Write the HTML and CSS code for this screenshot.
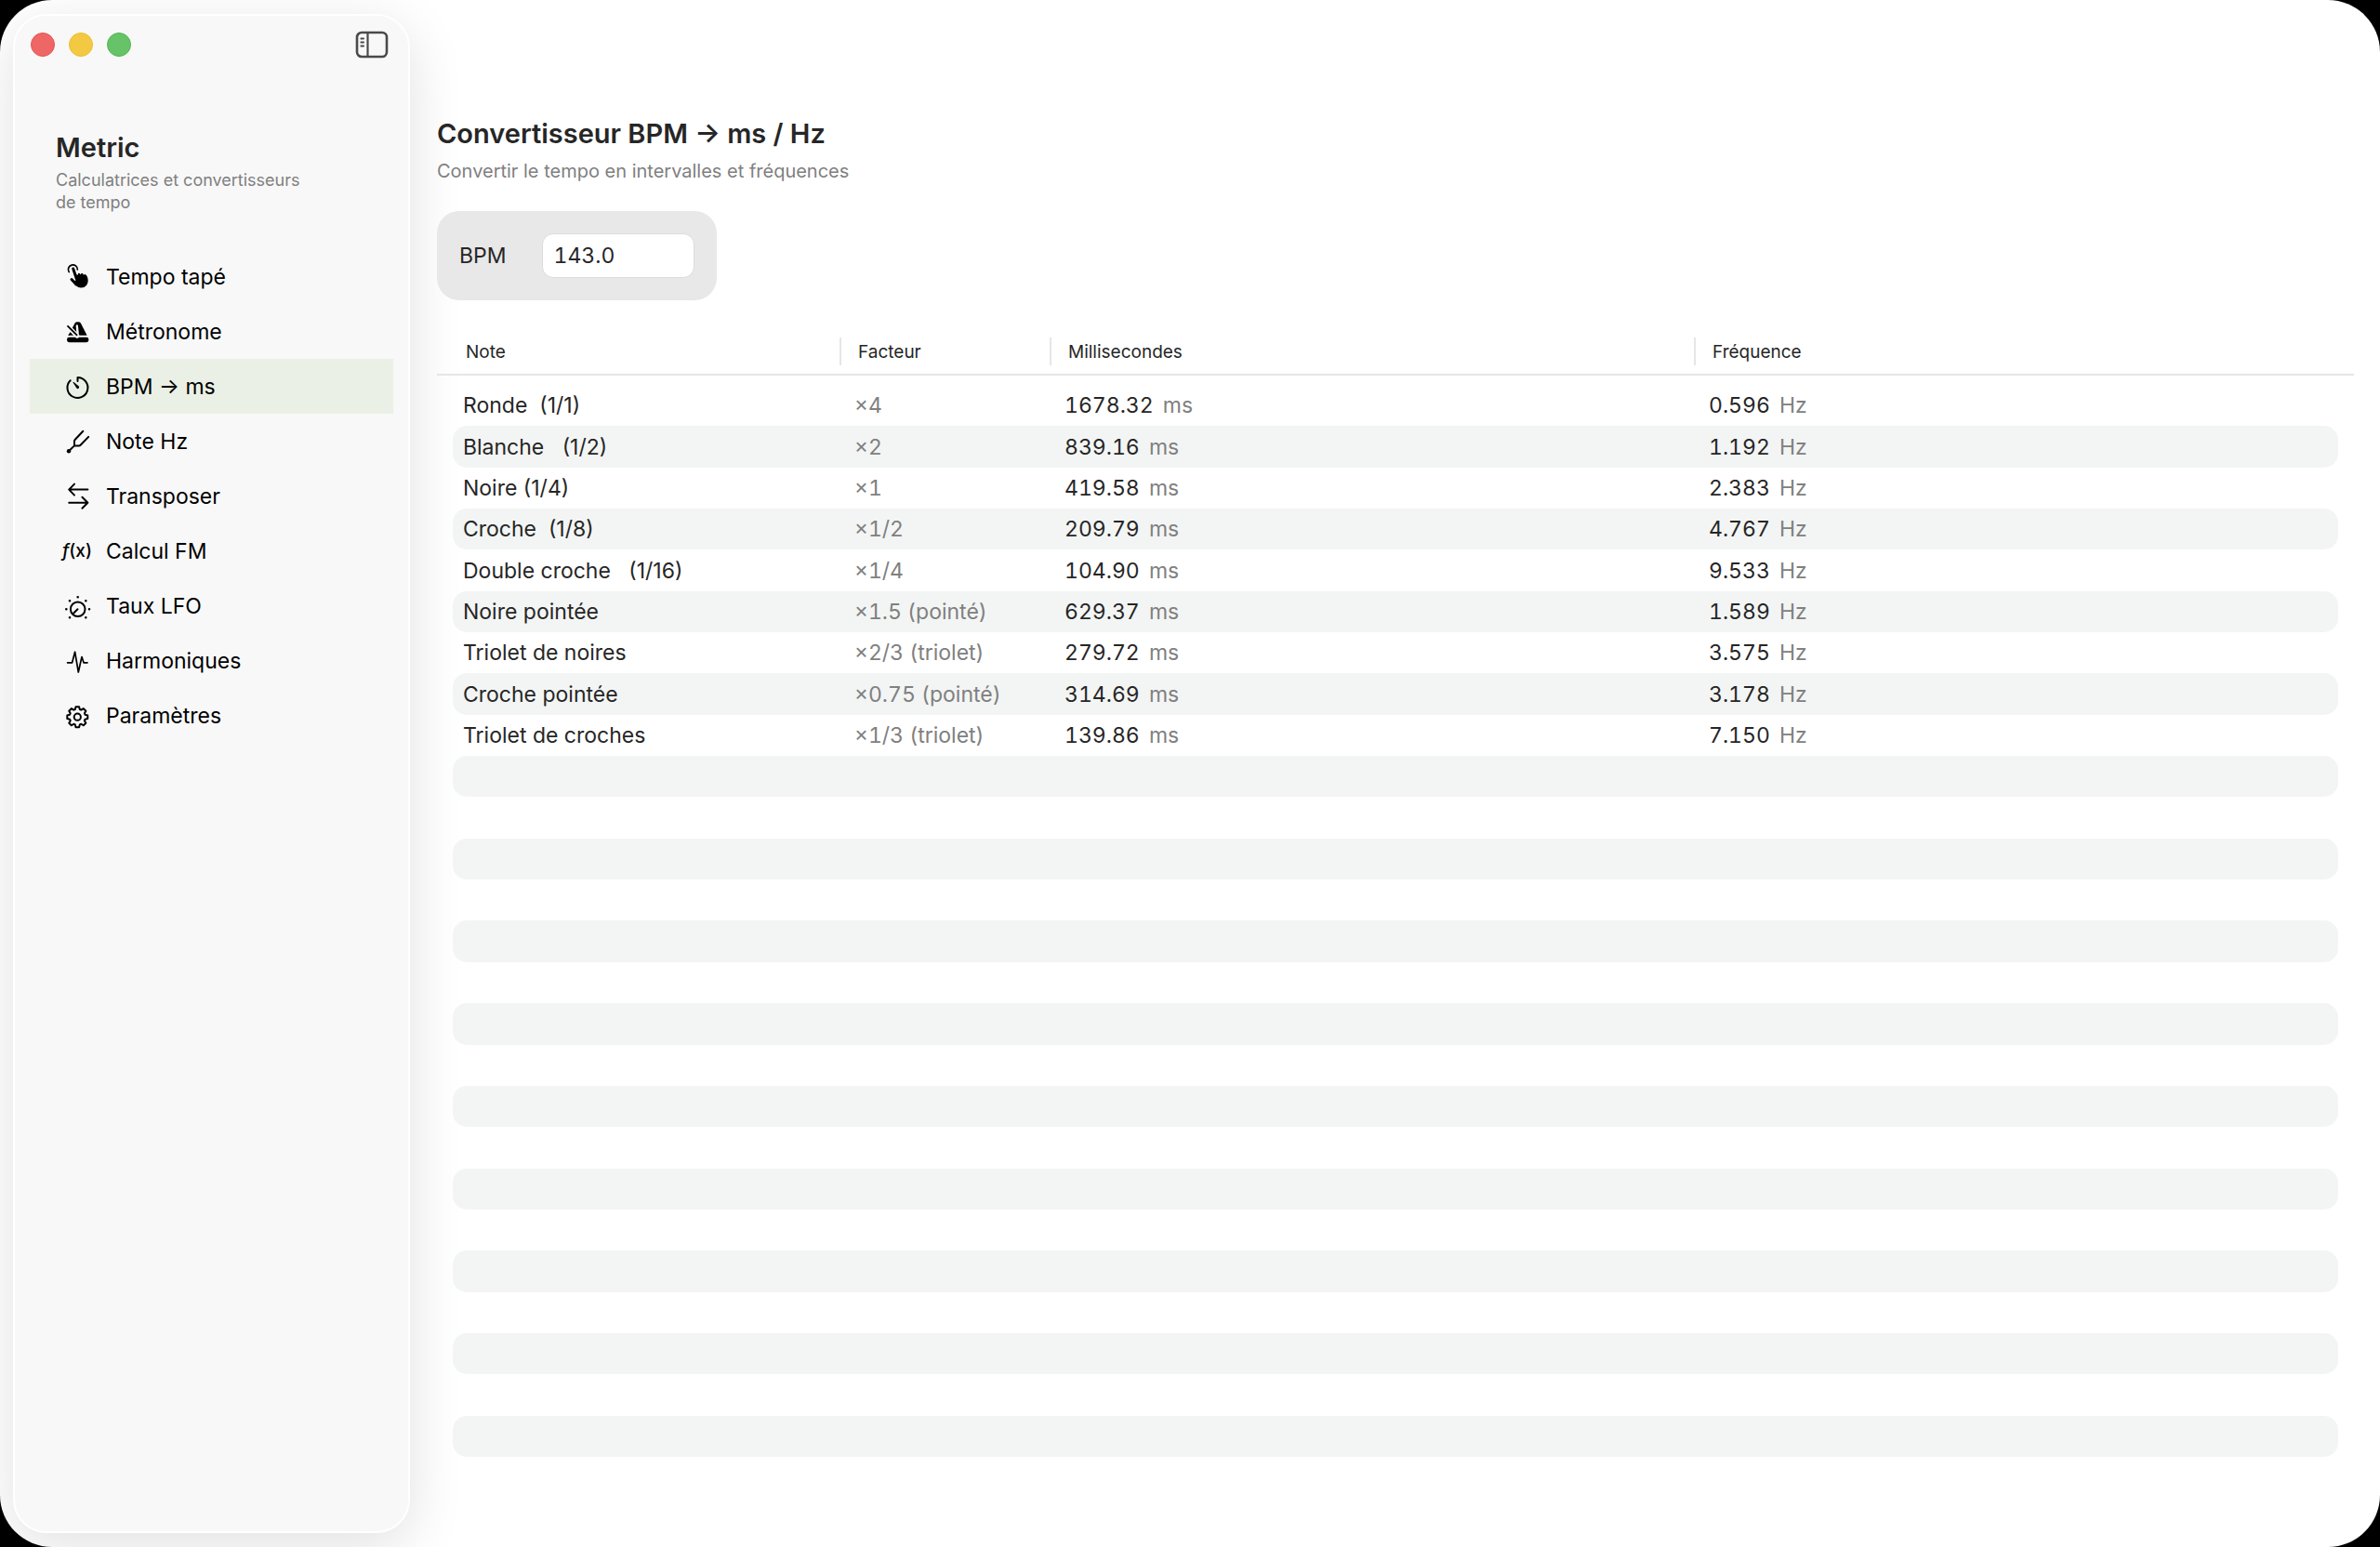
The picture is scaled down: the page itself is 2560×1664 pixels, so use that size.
FILE: index.html
```
<!DOCTYPE html>
<html lang="fr">
<head>
  <meta charset="utf-8">
  <title>Metric</title>
  <link rel="stylesheet" href="styles.css">
</head>
<body>
  <div class="window">
    <aside class="sidebar">
      <div class="titlebar">
        <button type="button" class="light light-close" aria-label="Fermer"></button>
        <button type="button" class="light light-minimize" aria-label="Réduire"></button>
        <button type="button" class="light light-zoom" aria-label="Agrandir"></button>
        <button type="button" class="toggle" aria-label="Barre latérale">
          <svg width="36" height="30" viewBox="0 0 36 30" fill="none" stroke="#4a4a4a" stroke-width="2.6" stroke-linecap="round">
            <rect x="2" y="2" width="32" height="26" rx="5"/>
            <path d="M13.5 2v26" stroke-width="2.2"/>
            <path d="M6.3 8.5h2.8M6.3 12.5h2.8M6.3 16.5h2.8" stroke-width="1.8"/>
          </svg>
        </button>
      </div>

      <div class="brand">
        <h2>Metric</h2>
        <p>Calculatrices et convertisseurs<br>de tempo</p>
      </div>

      <nav class="menu">
        <a href="#tempo" class="menu-item">
          <svg class="icon" viewBox="0 0 32 32">
            <path d="M7.2 10.6A5 5 0 1 1 16.4 8" stroke-width="1.7"/>
            <path d="M11.7 7L15.4 18" stroke-width="3"/>
            <path d="M10 18.5L15 24" stroke-width="3"/>
            <path class="solid" d="M13.6 12.5L16.6 14Q16.8 11.6 18 11.8Q19 11.8 19.6 13.4Q20.2 11.8 21.4 12Q22.6 12.2 23 14Q23.8 12.6 25 13.2Q26.4 13.8 27.2 16.6Q28.6 21.5 26 25Q23.5 27.7 20 27.5Q16.5 27.3 14 24.5L12.5 20.5L15 19z"/>
          </svg>
          Tempo tapé
        </a>
        <a href="#metronome" class="menu-item">
          <svg class="icon" viewBox="0 0 32 32">
            <rect class="solid" x="5" y="21.8" width="23.4" height="5.4" rx="2.4"/>
            <path class="solid" d="M13.6 6.6Q14.2 5.2 16.6 5.2Q19.2 5.2 19.8 6.6L26.6 19.8H6.6z"/>
            <path class="cut" d="M15.8 9.5L16.6 17.5" stroke-width="2.4"/>
            <path class="cut" d="M5.8 10L16 20.2" stroke-width="5"/>
            <path d="M6 9.8L15.6 19.4" stroke-width="1.8"/>
            <path d="M7.2 19.2L9 17.6" stroke-width="1.4"/>
          </svg>
          Métronome
        </a>
        <a href="#bpm" class="menu-item active">
          <svg class="icon" viewBox="0 0 32 32">
            <path d="M16.5 10V6A11 11 0 1 1 8.7 9.2" stroke-width="2"/>
            <path class="solid" d="M11.4 11.2Q11.8 10.6 12.4 11L17.8 15.6Q18.6 16.8 17.6 17.8Q16.4 18.6 15.4 17.6z"/>
          </svg>
          BPM → ms
        </a>
        <a href="#note" class="menu-item">
          <svg class="icon" viewBox="0 0 32 32">
            <path d="M22.3 4.8L13.6 14Q13 14.6 13 15.6V20.4H18Q19 20.4 19.6 19.8L28.2 10.9M13 20.4L7 26.2" stroke-width="2"/>
            <circle class="solid" cx="7" cy="26.3" r="2.2"/>
          </svg>
          Note Hz
        </a>
        <a href="#transposer" class="menu-item">
          <svg class="icon" viewBox="0 0 32 32">
            <path d="M27.4 8.6H7.2M13 2.6L7.2 8.6L13 14.6M7.2 22.8H27.4M21.4 16.8L27.4 22.8L21.4 28.8" stroke-width="2"/>
          </svg>
          Transposer
        </a>
        <a href="#fm" class="menu-item">
          <span class="icon icon-text"><i>f</i>(x)</span>
          Calcul FM
        </a>
        <a href="#lfo" class="menu-item">
          <svg class="icon" viewBox="0 0 32 32">
            <circle cx="16.7" cy="19.2" r="7.8" stroke-width="2"/>
            <path d="M16.5 19.2L12.2 23.5" stroke-width="2"/>
            <path d="M16.7 6.2v0M8 10.2v0M25.3 10.2v0M4.3 19.2v0M29 19.2v0M8 28.2v0M25.3 28.2v0" stroke-width="2.6"/>
          </svg>
          Taux LFO
        </a>
        <a href="#harmoniques" class="menu-item">
          <svg class="icon" viewBox="0 0 32 32">
            <path d="M5.6 17.8H10.6L13.6 6.2L17.3 28L21 11.5L23 17.8H27" stroke-width="1.7"/>
          </svg>
          Harmoniques
        </a>
        <a href="#parametres" class="menu-item">
          <svg class="icon" viewBox="0 0 32 32">
            <g transform="translate(16.3 17.2)" stroke-width="2">
              <path d="M-2.5-8.2L-1.8-11H1.8L2.5-8.2L4.03-7.57L6.5-9.05L9.05-6.5L7.57-4.03L8.2-2.5L11-1.8V1.8L8.2 2.5L7.57 4.03L9.05 6.5L6.5 9.05L4.03 7.57L2.5 8.2L1.8 11H-1.8L-2.5 8.2L-4.03 7.57L-6.5 9.05L-9.05 6.5L-7.57 4.03L-8.2 2.5L-11 1.8V-1.8L-8.2-2.5L-7.57-4.03L-9.05-6.5L-6.5-9.05L-4.03-7.57z"/>
              <circle r="3.6"/>
            </g>
          </svg>
          Paramètres
        </a>
      </nav>
    </aside>

    <main class="content">
      <h1>Convertisseur BPM → ms / Hz</h1>
      <p class="subtitle">Convertir le tempo en intervalles et fréquences</p>

      <form class="bpm-box">
        <label for="bpmInput">BPM</label>
        <input type="text" id="bpmInput" name="bpm" value="143.0">
      </form>

      <table class="notes">
        <thead>
          <tr>
            <th>Note</th>
            <th>Facteur</th>
            <th>Millisecondes</th>
            <th>Fréquence</th>
          </tr>
        </thead>
        <tbody>
          <tr><td>Ronde  (1/1)</td><td>×4</td><td>1678.32 <span>ms</span></td><td>0.596 <span>Hz</span></td></tr>
          <tr><td>Blanche   (1/2)</td><td>×2</td><td>839.16 <span>ms</span></td><td>1.192 <span>Hz</span></td></tr>
          <tr><td>Noire (1/4)</td><td>×1</td><td>419.58 <span>ms</span></td><td>2.383 <span>Hz</span></td></tr>
          <tr><td>Croche  (1/8)</td><td>×1/2</td><td>209.79 <span>ms</span></td><td>4.767 <span>Hz</span></td></tr>
          <tr><td>Double croche   (1/16)</td><td>×1/4</td><td>104.90 <span>ms</span></td><td>9.533 <span>Hz</span></td></tr>
          <tr><td>Noire pointée</td><td>×1.5 (pointé)</td><td>629.37 <span>ms</span></td><td>1.589 <span>Hz</span></td></tr>
          <tr><td>Triolet de noires</td><td>×2/3 (triolet)</td><td>279.72 <span>ms</span></td><td>3.575 <span>Hz</span></td></tr>
          <tr><td>Croche pointée</td><td>×0.75 (pointé)</td><td>314.69 <span>ms</span></td><td>3.178 <span>Hz</span></td></tr>
          <tr><td>Triolet de croches</td><td>×1/3 (triolet)</td><td>139.86 <span>ms</span></td><td>7.150 <span>Hz</span></td></tr>
          <!-- empty rows fill the rest of the window -->
          <tr></tr>
          <tr></tr>
          <tr></tr>
          <tr></tr>
          <tr></tr>
          <tr></tr>
          <tr></tr>
          <tr></tr>
          <tr></tr>
          <tr></tr>
          <tr></tr>
          <tr></tr>
          <tr></tr>
          <tr></tr>
          <tr></tr>
          <tr></tr>
          <tr></tr>
        </tbody>
      </table>
    </main>
  </div>
</body>
</html>
```
FILE: styles.css
```
* {
  box-sizing: border-box;
}

body {
  margin: 0;
  background-color: #000;
  color: #262626;
  font-family: Inter, "Liberation Sans", sans-serif;
  font-size: 23px;
  line-height: 28px;
}

h1, h2, p {
  margin: 0;
}

h1, h2 {
  font-size: 29px;
  line-height: 38px;
  font-weight: 600;
}

.window {
  display: flex;
  min-height: 100vh;
  background-color: #fff;
  border-radius: 56px;
  overflow: hidden;
}

/* sidebar */
.sidebar {
  flex: none;
  width: 427px;
  margin: 15px 0 15px 14px;
  padding: 16px;
  background-color: #f8f8f8;
  border: 2px solid #fff;
  border-radius: 36px;
  box-shadow: 0 14px 60px rgba(0, 0, 0, 0.12);
}

.titlebar {
  display: flex;
  align-items: center;
  gap: 15px;
  padding: 0 5px 0 1px;
}

.light {
  width: 26px;
  height: 26px;
  padding: 0;
  border: 1px solid;
  border-radius: 50%;
}

.light-close {
  background-color: #ee6766;
  border-color: #e65350;
}

.light-minimize {
  background-color: #f3c943;
  border-color: #ecbd2c;
}

.light-zoom {
  background-color: #67c367;
  border-color: #50b54f;
}

.toggle {
  display: flex;
  margin-left: auto;
  padding: 0;
  border: none;
  background: none;
}

.brand {
  padding: 77px 28px 38px;
}

.brand p {
  margin-top: 4px;
  font-size: 18px;
  line-height: 24px;
  color: #808080;
}

.menu-item {
  display: flex;
  align-items: center;
  gap: 15px;
  height: 59px;
  padding-left: 35px;
  color: #000;
  text-decoration: none;
}

.menu-item.active {
  background-color: #eaf0e5;
}

.icon {
  flex: none;
  width: 32px;
  height: 32px;
  fill: none;
  stroke: #000;
  stroke-linecap: round;
  stroke-linejoin: round;
}

.icon .solid {
  fill: #000;
  stroke: none;
}

.icon .cut {
  stroke: #f8f8f8;
}

.icon-text {
  font-size: 19px;
  font-weight: 500;
  line-height: 32px;
  text-align: center;
  white-space: nowrap;
}

/* content */
.content {
  flex: 1;
  display: flex;
  flex-direction: column;
  padding: 125px 28px 97px 29px;
}

.subtitle {
  margin-top: 9px;
  font-size: 20px;
  line-height: 24px;
  color: #808080;
}

.bpm-box {
  display: flex;
  align-items: center;
  align-self: flex-start;
  gap: 38px;
  margin-top: 31px;
  padding: 24px;
  background-color: #e8e8e8;
  border-radius: 24px;
}

.bpm-box input {
  width: 164px;
  height: 48px;
  padding: 0 12px;
  border: 1px solid #dcdcdc;
  border-radius: 12px;
  background-color: #fff;
  color: #262626;
  font: inherit;
  font-variant-numeric: tabular-nums;
}

/* table */
.notes {
  flex: 1;
  display: flex;
  flex-direction: column;
  margin-top: 40px;
}

.notes tr {
  display: grid;
  grid-template-columns: 416px 226px 1fr 1fr;
  align-items: center;
}

.notes thead tr {
  padding: 0 17px 9px;
  border-bottom: 2px solid #e6e6e6;
}

.notes th {
  height: 30px;
  padding: 0 0 0 18px;
  border-left: 2px solid #e6e6e6;
  font-size: 19px;
  line-height: 32px;
  font-weight: 400;
  text-align: left;
}

.notes th:first-child {
  border: none;
  padding-left: 14px;
}

.notes tbody {
  flex: 1;
  display: grid;
  grid-auto-rows: 1fr;
  padding: 10px 17px 0;
}

.notes tbody tr {
  border-radius: 15px;
}

.notes tbody tr:nth-child(even) {
  background-color: #f3f5f4;
}

.notes td {
  padding: 0 0 0 16px;
  white-space: pre;
  font-variant-numeric: tabular-nums;
}

.notes td:first-child {
  padding-left: 11px;
  font-variant-numeric: normal;
}

.notes td:nth-child(2),
.notes td span {
  color: #808080;
}

.notes td span {
  padding-left: 4px;
}
```
